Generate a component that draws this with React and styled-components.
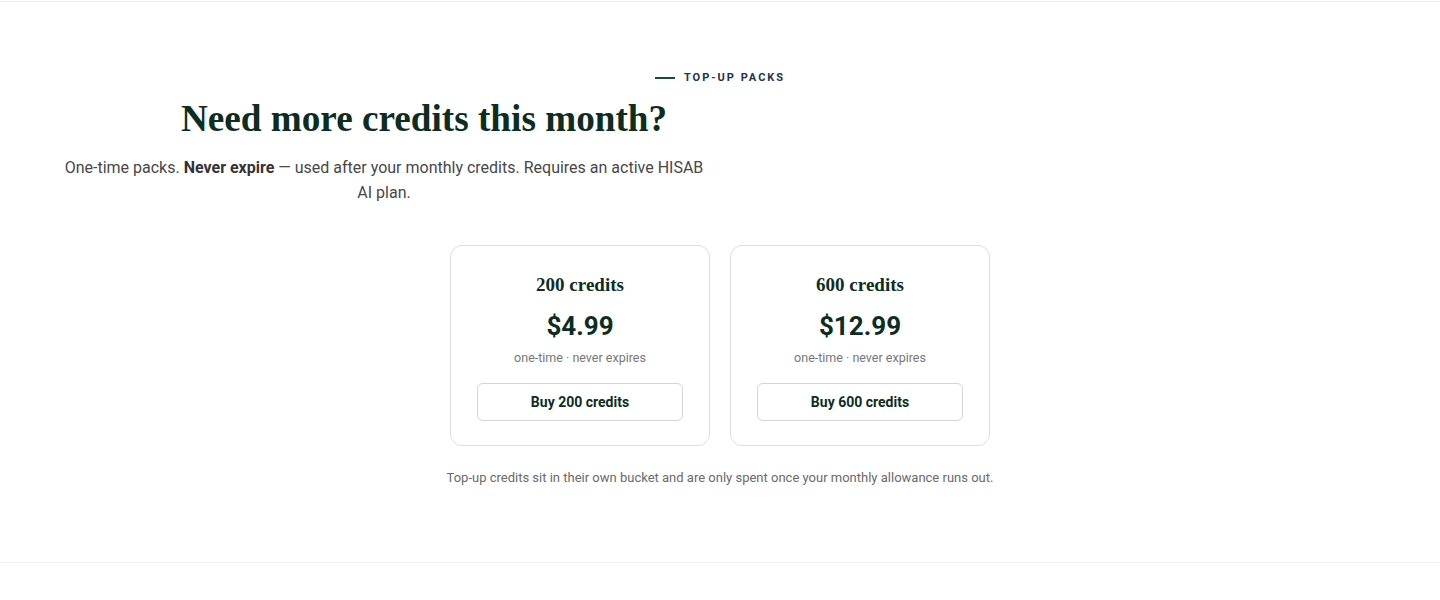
import React from "react";
import styled, { createGlobalStyle } from "styled-components";

const Global = createGlobalStyle`
  html, body { margin: 0; padding: 0; background: #fff; }
  body { font-family: Roboto, "Liberation Sans", sans-serif; }
  * { box-sizing: border-box; }
`;

const Section = styled.section`
  margin-top: 1px;
  border-top: 1px solid #efefef;
  border-bottom: 1px solid #efefef;
  padding: 68px 0 76px;
`;

const Header = styled.header`
  padding: 0 64px;
  display: flex;
  flex-direction: column;
`;

const Eyebrow = styled.div`
  display: flex;
  align-items: center;
  justify-content: center;
  gap: 9px;
  font-size: 11px;
  font-weight: 700;
  letter-spacing: 2px;
  color: #22324f;
  line-height: 16px;
  text-transform: uppercase;
  &::before {
    content: "";
    width: 20px;
    height: 2px;
    background: #1c4a38;
  }
`;

const Title = styled.h2`
  max-width: 720px;
  margin: 9px 0 0;
  text-align: center;
  font-family: "Liberation Serif", "Times New Roman", serif;
  font-weight: 700;
  font-size: 37.2px;
  line-height: 48px;
  color: #0d2d22;
`;

const Lead = styled.p`
  max-width: 640px;
  margin: 12px 0 0;
  text-align: center;
  font-size: 16px;
  line-height: 25px;
  color: #474747;
  b { color: #333; font-weight: 700; }
`;

const Packs = styled.div`
  display: flex;
  justify-content: center;
  gap: 20px;
  margin-top: 40px;
`;

const Card = styled.div`
  width: 260px;
  border: 1px solid #dedede;
  border-radius: 12px;
  padding: 27px 26px 24px;
  display: flex;
  flex-direction: column;
  align-items: center;
`;

const PackName = styled.div`
  font-family: "Liberation Serif", "Times New Roman", serif;
  font-weight: 700;
  font-size: 19px;
  line-height: 24px;
  color: #0d2d22;
`;

const Price = styled.div`
  margin-top: 13px;
  font-size: 26px;
  font-weight: 700;
  line-height: 32px;
  color: #0d2d22;
`;

const Note = styled.div`
  margin-top: 8px;
  font-size: 12.5px;
  line-height: 16px;
  color: #777;
`;

const BuyButton = styled.button`
  margin-top: 17px;
  width: 100%;
  height: 38px;
  border: 1px solid #d4d4d4;
  border-radius: 6px;
  background: #fff;
  font-family: Roboto, "Liberation Sans", sans-serif;
  font-size: 14px;
  font-weight: 700;
  color: #0d2d22;
  cursor: pointer;
`;

const Footnote = styled.p`
  margin: 24px 0 0;
  text-align: center;
  font-size: 13px;
  line-height: 16px;
  color: #6a6a6a;
`;

const packs = [
  { credits: 200, price: "$4.99" },
  { credits: 600, price: "$12.99" },
];

export default function App() {
  return (
    <>
      <Global />
      <Section>
        <Header>
          <Eyebrow>Top-up packs</Eyebrow>
          <Title>Need more credits this month?</Title>
          <Lead>
            One-time packs. <b>Never expire</b> — used after your monthly credits. Requires an
            active HISAB AI plan.
          </Lead>
        </Header>
        <Packs>
          {packs.map((p) => (
            <Card key={p.credits}>
              <PackName>{p.credits} credits</PackName>
              <Price>{p.price}</Price>
              <Note>one-time · never expires</Note>
              <BuyButton>Buy {p.credits} credits</BuyButton>
            </Card>
          ))}
        </Packs>
        <Footnote>
          Top-up credits sit in their own bucket and are only spent once your monthly allowance runs out.
        </Footnote>
      </Section>
    </>
  );
}
